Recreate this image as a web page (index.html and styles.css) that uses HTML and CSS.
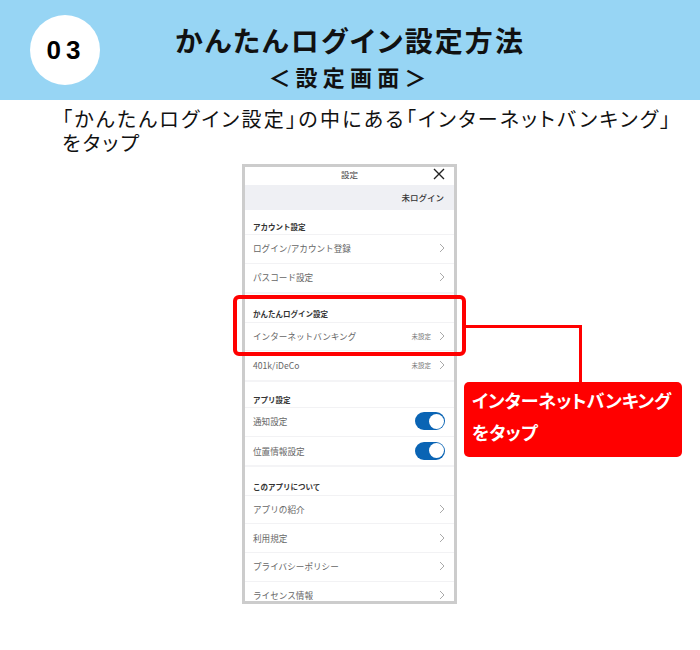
FILE: index.html
```html
<!DOCTYPE html>
<html lang="ja">
<head>
<meta charset="utf-8">
<title>かんたんログイン設定方法</title>
<link rel="stylesheet" href="styles.css">
</head>
<body>
<div class="page">
  <header class="hero">
    <div class="badge">03</div>
    <div class="hero-text">
      <h1 class="hero-title">かんたんログイン設定方法</h1>
      <p class="hero-sub">＜設定画面＞</p>
    </div>
  </header>
  <p class="lead">「かんたんログイン設定」の中にある「インターネットバンキング」<br>をタップ</p>
  <div class="phone-wrap">
    <div class="phone">
      <div class="topbar">
        <span class="topbar-title">設定</span>
        <svg class="close" viewBox="0 0 12 12"><path d="M1 1L11 11M11 1L1 11"/></svg>
      </div>
      <div class="status-band">未ログイン</div>
      <div class="label label-first">アカウント設定</div>
      <div class="row"><span class="row-name">ログイン/アカウント登録</span><svg class="chev" viewBox="0 0 6 10"><path d="M1 1L5 5L1 9"/></svg></div>
      <div class="row row-last"><span class="row-name">パスコード設定</span><svg class="chev" viewBox="0 0 6 10"><path d="M1 1L5 5L1 9"/></svg></div>
      <div class="label">かんたんログイン設定</div>
      <div class="row"><span class="row-name">インターネットバンキング</span><span class="row-state">未設定</span><svg class="chev" viewBox="0 0 6 10"><path d="M1 1L5 5L1 9"/></svg></div>
      <div class="row row-last"><span class="row-name">401k/iDeCo</span><span class="row-state">未設定</span><svg class="chev" viewBox="0 0 6 10"><path d="M1 1L5 5L1 9"/></svg></div>
      <div class="label label-tight">アプリ設定</div>
      <div class="row"><span class="row-name">通知設定</span><span class="toggle"></span></div>
      <div class="row row-last"><span class="row-name">位置情報設定</span><span class="toggle"></span></div>
      <div class="label">このアプリについて</div>
      <div class="row"><span class="row-name">アプリの紹介</span><svg class="chev" viewBox="0 0 6 10"><path d="M1 1L5 5L1 9"/></svg></div>
      <div class="row"><span class="row-name">利用規定</span><svg class="chev" viewBox="0 0 6 10"><path d="M1 1L5 5L1 9"/></svg></div>
      <div class="row"><span class="row-name">プライバシーポリシー</span><svg class="chev" viewBox="0 0 6 10"><path d="M1 1L5 5L1 9"/></svg></div>
      <div class="row"><span class="row-name">ライセンス情報</span><svg class="chev" viewBox="0 0 6 10"><path d="M1 1L5 5L1 9"/></svg></div>
    </div>
  </div>
  <div class="highlight"></div>
  <div class="connector"></div>
  <div class="callout">インターネットバンキング<br>をタップ</div>
</div>
</body>
</html>
```
FILE: styles.css
```css
* { box-sizing: border-box; }
html, body { margin: 0; padding: 0; background: #fff; }
body { font-family: "Noto Sans CJK JP", "Liberation Sans", sans-serif; color: #111; }
.page { position: relative; width: 700px; height: 650px; overflow: hidden; }

.hero { position: relative; height: 100px; background: #97d5f4; display: flex; justify-content: center; align-items: center; }
.badge { position: absolute; left: 30px; top: 15px; width: 70px; height: 70px; border-radius: 50%; background: #fff; display: flex; align-items: center; justify-content: center; padding-left: 2px; font-family: "Liberation Sans", sans-serif; font-weight: 700; font-size: 26px; letter-spacing: 5px; color: #000; }
.hero-text { text-align: center; padding-top: 11px; }
.hero-title { margin: 0; font-size: 28px; line-height: 40px; font-weight: 700; letter-spacing: 2.1px; font-feature-settings: "palt"; color: #111; }
.hero-sub { margin: 0; font-size: 22px; line-height: 32px; font-weight: 700; letter-spacing: 5.2px; color: #111; }

.lead { margin: 7px 20px 0 62px; font-size: 20px; line-height: 24px; letter-spacing: 2.3px; font-feature-settings: "palt"; font-weight: 400; color: #111; white-space: nowrap; }

.phone-wrap { display: flex; justify-content: center; margin-top: 9px; }
.phone { width: 215px; height: 440px; border: 3px solid #cccccc; overflow: hidden; background: #fff; margin-right: 1px; }
.topbar { position: relative; height: 18px; padding-bottom: 5px; display: flex; align-items: center; justify-content: center; }
.topbar-title { font-size: 8.5px; color: #444; }
.close { position: absolute; right: 9px; top: 1px; width: 12px; height: 12px; fill: none; stroke: #222; stroke-width: 1.4; }
.status-band { height: 25px; padding-bottom: 1px; background: #eff0f4; display: flex; align-items: center; justify-content: flex-end; padding-right: 10px; font-size: 8.5px; font-weight: 500; color: #333; }
.label { height: 30.4px; padding: 0 8px 3px; display: flex; align-items: flex-end; font-size: 7.5px; font-weight: 700; color: #333; border-bottom: 1px solid #f2f2f4; border-top: 2px solid #f4f4f6; }
.label-first { height: 25px; border-top: 0; padding-bottom: 2px; }
.label-tight { height: 28.4px; padding-bottom: 2.5px; }
.row { height: 28.6px; padding: 0 9px 1px 8px; display: flex; align-items: center; border-bottom: 1px solid #f2f2f4; }
.row-last { border-bottom: 0; }
.row-name { flex: 1; font-size: 8.6px; color: #666; }
.row-state { font-size: 6.5px; color: #777; margin-right: 8px; }
.chev { width: 6px; height: 10px; fill: none; stroke: #aaa; stroke-width: 1; }
.toggle { position: relative; width: 30px; height: 18px; border-radius: 9px; background: #0a64b4; }
.toggle::after { content: ""; position: absolute; right: 1.5px; top: 1.5px; width: 15px; height: 15px; border-radius: 50%; background: #fff; }

.highlight { position: absolute; left: 233px; top: 295px; width: 233px; height: 61px; border: 4px solid #ff0000; border-radius: 6px; }
.connector { position: absolute; left: 465px; top: 325px; width: 117px; height: 58px; border-top: 3px solid #ff0000; border-right: 3px solid #ff0000; }
.callout { position: absolute; left: 464px; top: 382px; width: 218px; height: 75px; padding: 2px 0 0 8px; background: #ff0000; border-radius: 5px; color: #fff; font-size: 18px; font-weight: 700; line-height: 32px; font-feature-settings: "palt"; white-space: nowrap; }
```
